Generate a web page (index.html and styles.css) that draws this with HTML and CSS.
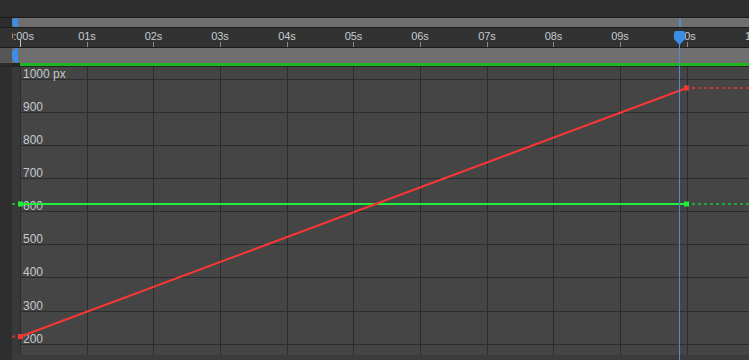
FILE: index.html
```html
<!DOCTYPE html>
<html lang="en">
<head>
    <meta charset="UTF-8">
    <title>Graph editor</title>
    <link rel="stylesheet" href="styles.css">
</head>
<body>
<div id="timeline">
    <div class="top"></div>

    <div class="row scroll-row">
        <div class="gutter"></div>
        <div class="scrollbar"><span class="cap"></span></div>
    </div>

    <div class="row ruler-row">
        <svg class="ruler" width="749" height="19" viewBox="0 0 749 19">
            <g class="ticks">
                <line class="first" x1="20.5" y1="11" x2="20.5" y2="19"/>
                <line x1="87.5" y1="14" x2="87.5" y2="19"/>
                <line x1="153.5" y1="14" x2="153.5" y2="19"/>
                <line x1="220.5" y1="14" x2="220.5" y2="19"/>
                <line x1="287.5" y1="14" x2="287.5" y2="19"/>
                <line x1="353.5" y1="14" x2="353.5" y2="19"/>
                <line x1="420.5" y1="14" x2="420.5" y2="19"/>
                <line x1="487.5" y1="14" x2="487.5" y2="19"/>
                <line x1="553.5" y1="14" x2="553.5" y2="19"/>
                <line x1="620.5" y1="14" x2="620.5" y2="19"/>
                <line x1="687.5" y1="14" x2="687.5" y2="19"/>
            </g>
            <g class="secs">
                <text x="20.5" y="12">0:00s</text>
                <text x="87" y="12">01s</text>
                <text x="153.5" y="12">02s</text>
                <text x="220" y="12">03s</text>
                <text x="287" y="12">04s</text>
                <text x="353.5" y="12">05s</text>
                <text x="420" y="12">06s</text>
                <text x="487" y="12">07s</text>
                <text x="553.5" y="12">08s</text>
                <text x="620" y="12">09s</text>
                <text x="687" y="12">10s</text>
                <text x="753.5" y="12">11s</text>
            </g>
            <rect class="mask" x="0" y="0" width="12" height="19"/>
            <path class="head" d="M674 5 Q674 3 676 3 L683 3 Q685 3 685 5 L685 11 L679.5 17 L674 11 Z"/>
        </svg>
    </div>

    <div class="row track-row">
        <div class="gutter"></div>
        <div class="track"><span class="cap"></span></div>
    </div>

    <div class="row key-row">
        <div class="gutter"></div>
        <div class="pad"></div>
        <div class="keys"></div>
    </div>

    <svg class="graph" width="749" height="293" viewBox="0 0 749 293">
        <rect class="side" x="0" y="0" width="12" height="293"/>
        <rect class="side2" x="12" y="0" width="8" height="293"/>
        <rect class="field" x="20" y="0" width="729" height="288"/>
        <rect class="foot" x="12" y="288" width="737" height="5"/>
        <g class="grid">
            <line x1="20" y1="12.5" x2="749" y2="12.5"/>
            <line x1="20" y1="45.5" x2="749" y2="45.5"/>
            <line x1="20" y1="78.5" x2="749" y2="78.5"/>
            <line x1="20" y1="111.5" x2="749" y2="111.5"/>
            <line x1="20" y1="144.5" x2="749" y2="144.5"/>
            <line x1="20" y1="177.5" x2="749" y2="177.5"/>
            <line x1="20" y1="210.5" x2="749" y2="210.5"/>
            <line x1="20" y1="244.5" x2="749" y2="244.5"/>
            <line x1="20" y1="277.5" x2="749" y2="277.5"/>
            <line x1="20.5" y1="0" x2="20.5" y2="288"/>
            <line x1="87.5" y1="0" x2="87.5" y2="288"/>
            <line x1="153.5" y1="0" x2="153.5" y2="288"/>
            <line x1="220.5" y1="0" x2="220.5" y2="288"/>
            <line x1="287.5" y1="0" x2="287.5" y2="288"/>
            <line x1="353.5" y1="0" x2="353.5" y2="288"/>
            <line x1="420.5" y1="0" x2="420.5" y2="288"/>
            <line x1="487.5" y1="0" x2="487.5" y2="288"/>
            <line x1="553.5" y1="0" x2="553.5" y2="288"/>
            <line x1="620.5" y1="0" x2="620.5" y2="288"/>
            <line x1="687.5" y1="0" x2="687.5" y2="288"/>
        </g>
        <g class="values">
            <text x="23" y="11">1000 px</text>
            <text x="23" y="44">900</text>
            <text x="23" y="77">800</text>
            <text x="23" y="110">700</text>
            <text x="23" y="143">600</text>
            <text x="23" y="176">500</text>
            <text x="23" y="209">400</text>
            <text x="23" y="243">300</text>
            <text x="23" y="276">200</text>
        </g>

        <!-- green curve -->
        <line class="g-dash" x1="12" y1="137" x2="15" y2="137"/>
        <line class="g-line" x1="20" y1="137" x2="686.5" y2="137"/>
        <line class="g-dash" x1="692" y1="137" x2="749" y2="137"/>
        <rect class="g-key" x="18" y="134.5" width="5" height="5"/>
        <rect class="g-key" x="684" y="134.5" width="5" height="5"/>

        <!-- red curve -->
        <line class="r-dash" x1="12" y1="269.5" x2="15" y2="269.5"/>
        <line class="r-line" x1="20.5" y1="269.5" x2="686.5" y2="21"/>
        <line class="r-dash" x1="692" y1="21" x2="749" y2="21"/>
        <rect class="r-key" x="18" y="267" width="5" height="5"/>
        <rect class="r-key" x="684" y="18.5" width="5" height="5"/>
    </svg>

    <div class="playhead-mark"></div>
    <div class="playhead"></div>
</div>
</body>
</html>
```

FILE: styles.css
```css
*{margin:0;padding:0;}
body{
    background:#2d2d2d;
    overflow:hidden;
}
#timeline{
    width:749px;
    height:360px;
    position:relative;
    display:flex;
    flex-direction:column;
    font-family:"Liberation Sans", Arial, sans-serif;
    overflow:hidden;
}
.top{
    height:17px;
    background:#2d2d2d;
    border-bottom:1px solid #1b1b1b;
}
.row{
    display:flex;
}
.gutter{
    width:12px;
    flex:none;
}
.scroll-row{
    height:9px;
    border-bottom:1px solid #1b1b1b;
}
.scroll-row .gutter{background:#2d2d2d;}
.scrollbar,
.track{
    flex:1;
    background:#6f6f6f;
    display:flex;
}
.cap{
    width:6px;
    background:#3a8ee6;
    border-radius:6px 0 0 6px;
}
.ruler-row{
    height:19px;
    background:#323232;
    border-bottom:1px solid #1b1b1b;
}
.ruler{display:block;}
.ruler .mask{fill:#323232;}
.ticks line{
    stroke:#8a8a8a;
    stroke-width:1;
}
.ticks line.first{stroke:#c8c8c8;}
.secs text{
    fill:#c6cacf;
    font-size:11px;
    text-anchor:middle;
}
.head{fill:#3a8ee6;}
.track-row{height:15px;}
.track-row .gutter{background:#565656;}
.key-row{
    height:3px;
    border-bottom:1px solid #262626;
}
.key-row .gutter{background:#2d2d2d;}
.key-row .pad{
    width:8px;
    background:#242424;
}
.keys{
    flex:1;
    background:#1db81d;
}
.graph{display:block;}
.side{fill:#2e2e2e;}
.side2{fill:#393939;}
.field{fill:#454545;}
.foot{fill:#3b3b3b;}
.grid line{
    stroke:#2c2c2c;
    stroke-width:1;
}
.values text{
    fill:#c4c8cc;
    font-size:12px;
}
.g-line{
    stroke:#1ef03a;
    stroke-width:2;
}
.g-dash{
    stroke:#22a63c;
    stroke-width:2;
    stroke-dasharray:3 3;
}
.g-key{fill:#1ef03a;}
.r-line{
    stroke:#f73636;
    stroke-width:2;
}
.r-dash{
    stroke:#c43a3a;
    stroke-width:2;
    stroke-dasharray:3 3;
}
.r-key{fill:#f73636;}
.playhead-mark{
    position:absolute;
    left:679px;
    top:18px;
    width:2px;
    height:9px;
    background:#5b8fc4;
}
.playhead{
    position:absolute;
    left:679px;
    top:44px;
    width:1px;
    bottom:0;
    background:#4a8fd6;
}
```
